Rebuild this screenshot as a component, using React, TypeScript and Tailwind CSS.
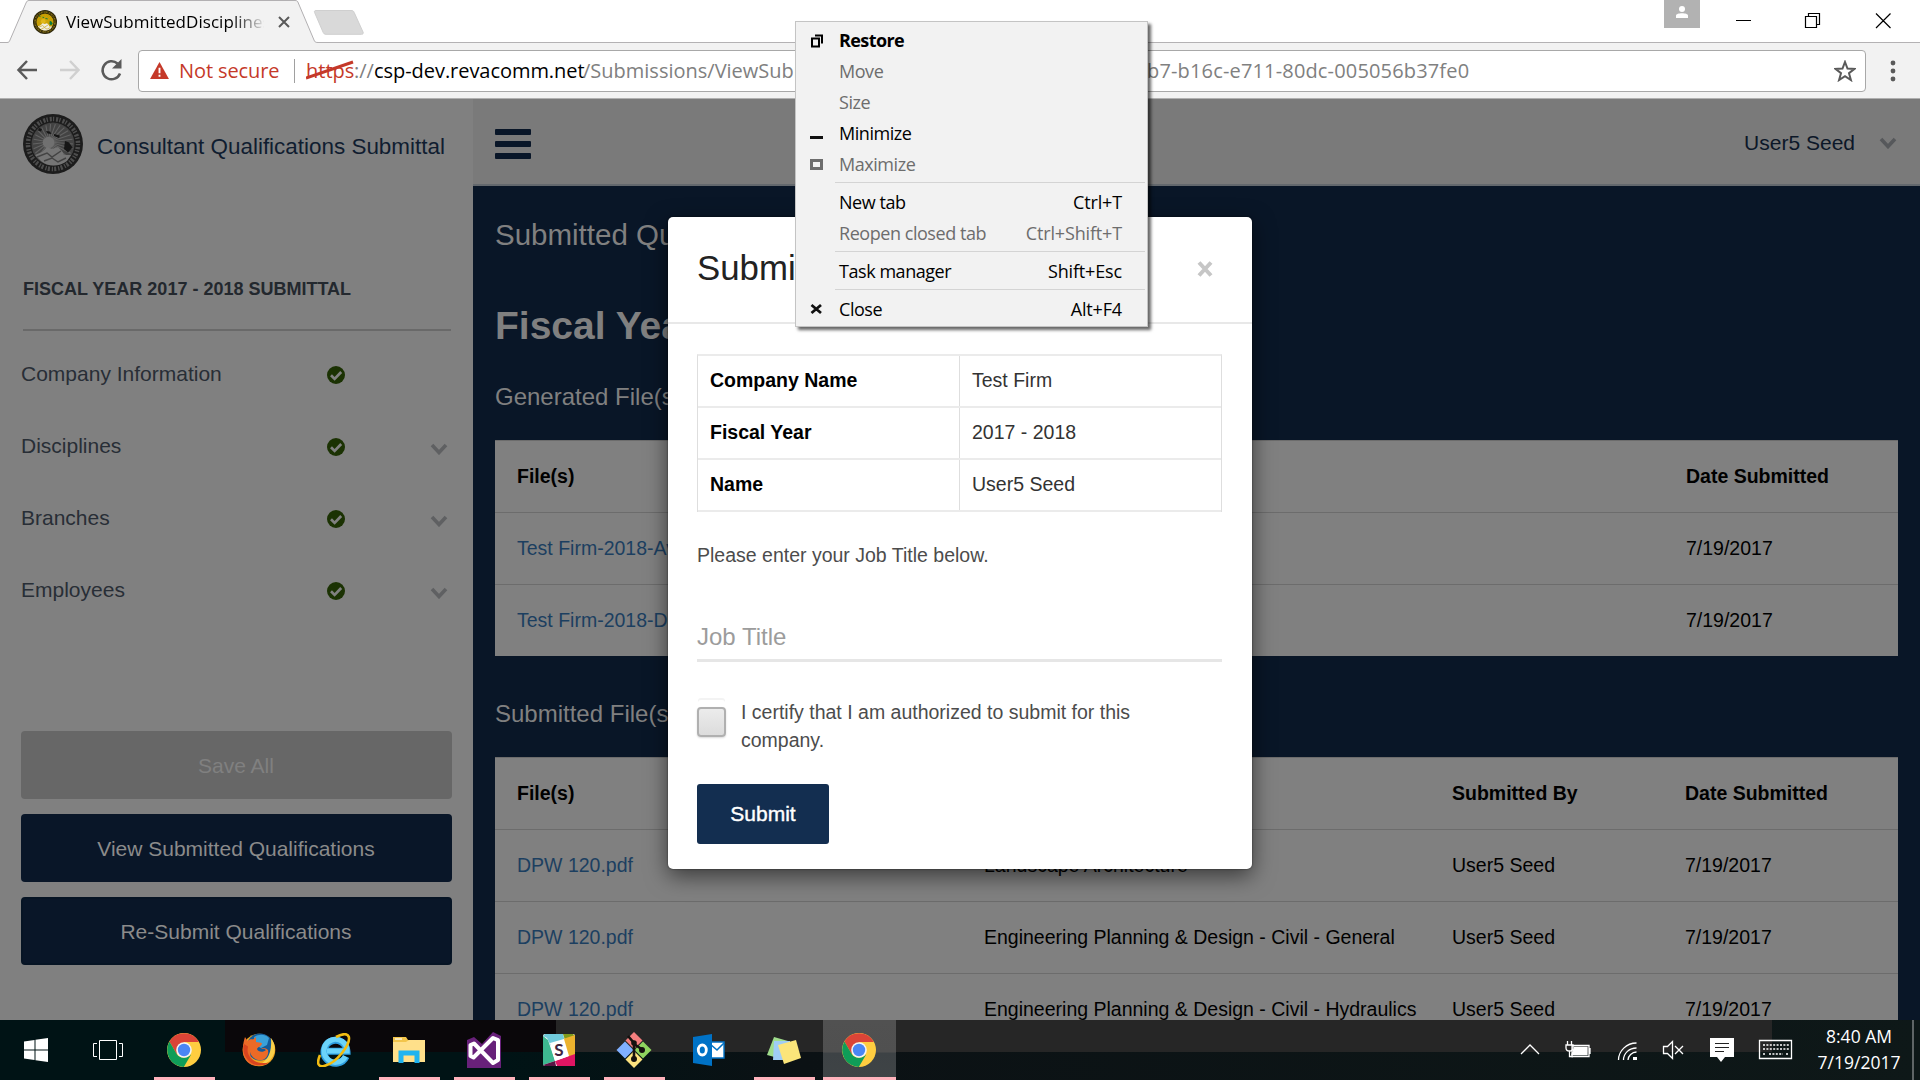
import React from "react";

const seg = "font-['Open_Sans',sans-serif]";

function Seal({ className, color }: { className: string; color?: boolean }) {
  const c = color
    ? { rim: "#2a2408", txt: "#a58a1c", mid: "#c39a00", hill: "#f0eee4", dark: "#0c7b3c", sun: "#e0b81a" }
    : { rim: "#1c1c1c", txt: "#5a5a5a", mid: "#434343", hill: "#757575", dark: "#161616", sun: "#707070" };
  const rays = Array.from({ length: 26 }, (_, i) => (i / 26) * Math.PI * 2);
  return (
    <svg viewBox="0 0 60 60" className={className}>
      <circle cx="30" cy="30" r="30" fill={c.rim} />
      <circle cx="30" cy="30" r="25" fill="none" stroke={c.txt} strokeWidth="4.500" strokeDasharray="1.3 1.9 2.1 1.2" opacity="0.8" />
      <circle cx="30" cy="30" r="21.500" fill={c.mid} />
      {rays.map((a, i) => (
        <line key={i} x1="26" y1="28" x2={30 + Math.cos(a) * 20} y2={30 + Math.sin(a) * 20} stroke={c.sun} strokeWidth="1.100" opacity="0.7" />
      ))}
      <circle cx="25.500" cy="28.500" r="5.800" fill={c.sun} />
      <path d="M16 14l3 1-1 2.500-3-1zM23 17l4 .5 1.500 2.500-4-.5zM31 20l6 1.500-1 2.500-5-2zM42 27l4 1.500 3.500 5-4.500 5-4-3.500z" fill={c.dark} />
      <path d="M12 41l7-3 5-5 5 2 6-2 4 4 2 4 7 0-4 6c-8 6-19 6-26 0z" fill={c.hill} />
      <path d="M14 43l10-4 5 4 9-6M21 47l8-3 6 4 8-4" fill="none" stroke={c.mid} strokeWidth="1.500" />
    </svg>
  );
}

function Chevron({ className }: { className: string }) {
  return (
    <svg viewBox="0 0 18 12" className={className}>
      <path d="M2 2l7 7.5L16 2" fill="none" stroke="currentColor" strokeWidth="3.6" />
    </svg>
  );
}

function CheckCircle() {
  return (
    <svg viewBox="0 0 18 18" className="h-[18px] w-[18px]">
      <circle cx="9" cy="9" r="9" fill="#1b3203" />
      <path d="M4 9.3l3.6 3.6L14.2 6" fill="none" stroke="#808080" strokeWidth="2.7" />
    </svg>
  );
}

function BrowserChrome() {
  return (
    <div className={`h-[99px] shrink-0 bg-white ${seg}`}>
      <div className="relative flex h-[43px] items-start border-b border-[#b4b2b4]">
        <svg viewBox="0 0 380 43" className="absolute left-0 top-0 h-[43px] w-[380px]">
          <path d="M0 42.5H7c2 0 2.500-1 3-2.500L26 3c.8-1.800 1.500-2.500 3-2.500H295c2 0 2.700.7 3.300 2.500L314 40c.6 1.700 1.300 2.500 4 2.500V43H0z" fill="#f2f2f2" />
          <path d="M0 42.500H7c2 0 2.500-1 3-2.500L26 3c.8-1.800 1.500-2.500 3-2.500H295c2 0 2.700.7 3.300 2.500L314 40c.6 1.700 1.300 2.500 4 2.500" fill="none" stroke="#b2b0b2" />
          <path d="M316 10.500H351c2 0 2.600.6 3.200 2L363 32c.6 1.500 0 2.300-1.500 2.300H326c-1.600 0-2.300-.6-2.900-2L314.600 12.500c-.5-1.300-.1-2 1.400-2z" fill="#d9d9d9" stroke="#cfcfcf" />
        </svg>
        <div className="relative flex h-[42px] items-center pl-[33px]">
          <Seal color className="mb-[-1px] h-6 w-6" />
          <div className="ml-[9px] mt-[1px] w-[198px] overflow-hidden whitespace-nowrap text-[17px] tracking-[0.05px] text-black [mask-image:linear-gradient(to_right,#000_165px,transparent_200px)]">ViewSubmittedDisciplines</div>
          <svg viewBox="0 0 12 12" className="ml-[14px] mt-[2px] h-3 w-3">
            <path d="M1 1l10 10M11 1L1 11" stroke="#5a5a5a" strokeWidth="2" />
          </svg>
        </div>
        <div className="relative ml-auto flex">
          <div className="flex h-7 w-9 items-start justify-center bg-[#b2b2b2] pt-[6px]">
            <svg viewBox="0 0 12 12" className="h-3 w-3 fill-white">
              <circle cx="6" cy="3" r="3" />
              <path d="M0 12V9.500C0 8 3 7.200 6 7.200s6 .8 6 2.300V12z" />
            </svg>
          </div>
          <svg viewBox="0 0 220 42" className="h-[42px] w-[220px]" fill="none" stroke="#000" strokeWidth="1.200">
            <path d="M36 20.500h15M105.500 16.500h11v11h-11zM108.500 16.500v-3h11v11h-3M176 13.500l14.500 14.500M190.500 13.500L176 28" />
          </svg>
        </div>
      </div>
      <div className="flex h-14 items-center border-b border-[#b0b0b0] bg-[#f2f2f2] pl-4">
        <svg viewBox="0 0 108 24" className="mb-[1px] h-6 w-[108px]" fill="none" strokeWidth="2.500">
          <path d="M21 12H3M11 3L2.500 12l8.500 9" stroke="#5a5a5a" />
          <path d="M44 12H62M54 3l8.500 9-8.500 9" stroke="#d0d0d0" />
          <path d="M104 15.500A9 9 0 1 1 101.500 5.500" stroke="#5a5a5a" />
          <path d="M105.500 1v9.500H96z" fill="#5a5a5a" />
        </svg>
        <div className="ml-[14px] flex h-[42px] w-[1728px] items-center whitespace-nowrap rounded-[4px] border border-[#a8a8a8] bg-white text-[20px]">
          <svg viewBox="0 0 20 18" className="ml-[11px] h-[17px] w-[19px]">
            <path d="M10 0l10 18H0z" fill="#c53929" />
            <path d="M10 6v6M10 13.500v2.200" stroke="#fff" strokeWidth="2" />
          </svg>
          <span className="ml-[10px] w-[100px] tracking-[-0.1px] text-[#c53929]">Not secure</span>
          <span className="ml-[15px] h-6 w-px bg-[#a0a0a0]" />
          <span className="relative ml-[11px] w-[48px] text-[#c53929]">
            https
            <svg viewBox="0 0 48 20" className="absolute left-0 top-[4px] h-5 w-12">
              <path d="M0 18L47 2" stroke="#c53929" strokeWidth="3" />
            </svg>
          </span>
          <span className="w-[20px] text-[#808080]">://</span>
          <span className="w-[209px] tracking-[-0.05px] text-black">csp-dev.revacomm.net</span>
          <span className="w-[564px] overflow-hidden text-[#808080]">/Submissions/ViewSubm</span>
          <span className="tracking-[0.16px] text-[#808080]">b7-b16c-e711-80dc-005056b37fe0</span>
          <svg viewBox="0 0 22 22" className="ml-auto mr-[9px] h-[22px] w-[22px]">
            <path d="M11 2l2.500 6.600 7 .3-5.500 4.300 1.900 6.800-5.900-3.900-5.900 3.900L7 13.200 1.500 8.900l7-.3z" fill="none" stroke="#5a5a5a" strokeWidth="2" />
          </svg>
        </div>
        <svg viewBox="0 0 6 22" className="ml-[24px] h-[22px] w-[6px] fill-[#5a5a5a]">
          <circle cx="3" cy="3" r="2.400" />
          <circle cx="3" cy="11" r="2.400" />
          <circle cx="3" cy="19" r="2.400" />
        </svg>
      </div>
    </div>
  );
}

function Sidebar() {
  const items = ["Company Information", "Disciplines", "Branches", "Employees"];
  return (
    <aside className="flex w-[473px] shrink-0 flex-col bg-[#808080]">
      <div className="flex h-[94px] items-center pl-[23px]">
        <Seal className="mb-[5px] h-[60px] w-[60px]" />
        <span className="ml-[14px] mt-[2px] whitespace-nowrap text-[22.450px] text-[#101d30]">Consultant Qualifications Submittal</span>
      </div>
      <div className="ml-[23px] mr-[22px] mt-[66px] flex h-[72px] items-start border-b-2 border-[#696969] pt-[20px] text-[18px] font-bold leading-5 text-[#23282e]">FISCAL YEAR 2017 - 2018 SUBMITTAL</div>
      <nav className="mt-[7px] flex flex-col">
        {items.map((it, i) => (
          <div key={it} className="flex h-[72px] items-center pl-[21px] text-[21px] text-[#282e36]">
            <span className="w-[306px] whitespace-nowrap">{it}</span>
            <span className="mt-[2px]"><CheckCircle /></span>
            {i > 0 && <Chevron className="ml-[85px] mt-[5px] h-3 w-[18px] text-[#5f6062]" />}
          </div>
        ))}
      </nav>
      <div className="mt-[105px] flex flex-col gap-[15px] px-[21px] text-[21px] text-[#8b8b8b]">
        <div className="flex h-[68px] items-center justify-center rounded-[4px] bg-[#676767] pr-[1px] pt-[2px] text-[#808080]">Save All</div>
        <div className="flex h-[68px] items-center justify-center rounded-[4px] bg-[#091628] pr-[1px] pt-[2px]">View Submitted Qualifications</div>
        <div className="flex h-[68px] items-center justify-center rounded-[4px] border-2 border-[#061424] bg-[#091628] pr-[1px] pt-[2px]">Re-Submit Qualifications</div>
      </div>
    </aside>
  );
}

const row = "grid h-[72px] shrink-0 items-center border-t border-[#6c6c6c] pl-[22px] whitespace-nowrap";

function Main() {
  const submitted = ["Landscape Architecture", "Engineering Planning & Design - Civil - General", "Engineering Planning & Design - Civil - Hydraulics"];
  return (
    <main className="flex min-w-0 flex-1 flex-col bg-[#091627]">
      <header className="flex h-[87px] shrink-0 items-center border-b-2 border-[#63686d] bg-[#7a7a7a] pl-[22px] pr-[23px]">
        <div className="flex flex-col gap-[6px] pt-[5px]">
          <span className="h-[6px] w-9 rounded-[1px] bg-[#091628]" />
          <span className="h-[6px] w-9 rounded-[1px] bg-[#091628]" />
          <span className="h-[6px] w-9 rounded-[1px] bg-[#091628]" />
        </div>
        <span className="ml-auto mt-[3px] text-[21px] text-[#0c1728]">User5 Seed</span>
        <Chevron className="ml-[24px] mt-[2px] h-3 w-[18px] text-[#56585b]" />
      </header>
      <div className="flex flex-col pl-[22px] pr-[22px]">
        <h1 className="mt-[29px] text-[29.500px] leading-10 text-[#808080]">Submitted Qu</h1>
        <h2 className="mt-[46px] text-[39px] font-bold leading-[50px] text-[#808080]">Fiscal Year</h2>
        <h3 className="mt-[31px] text-[24px] leading-[30px] text-[#808080]">Generated File(s)</h3>
        <div className="mt-[28px] flex flex-col bg-[#808080] text-[19.500px] text-black">
          <div className={`${row} grid-cols-[1169px_1fr] font-bold`}><span>File(s)</span><span>Date Submitted</span></div>
          <div className={`${row} grid-cols-[1169px_1fr]`}><span className="text-[#1c3f60]">Test Firm-2018-Av</span><span>7/19/2017</span></div>
          <div className={`${row} grid-cols-[1169px_1fr]`}><span className="text-[#1c3f60]">Test Firm-2018-D</span><span>7/19/2017</span></div>
        </div>
        <h3 className="mt-[43px] text-[24px] leading-[30px] text-[#808080]">Submitted File(s)</h3>
        <div className="mt-[28px] flex flex-col bg-[#808080] text-[19.500px] text-black">
          <div className={`${row} grid-cols-[935px_233px_1fr] font-bold`}><span>File(s)</span><span>Submitted By</span><span>Date Submitted</span></div>
          {submitted.map((d) => (
            <div key={d} className={`${row} grid-cols-[467px_468px_233px_1fr]`}>
              <span className="text-[#1c3f60]">DPW 120.pdf</span><span>{d}</span><span>User5 Seed</span><span>7/19/2017</span>
            </div>
          ))}
        </div>
      </div>
    </main>
  );
}

function Modal() {
  const rows = [["Company Name", "Test Firm"], ["Fiscal Year", "2017 - 2018"], ["Name", "User5 Seed"]];
  return (
    <div className="absolute left-[668px] top-[217px] flex h-[652px] w-[584px] flex-col rounded-[5px] bg-white text-[19.500px] text-[#4c4c4c] shadow-[0_7px_22px_rgba(0,0,0,0.55),0_0_2px_rgba(0,0,0,0.6)]">
      <div className="flex h-[107px] shrink-0 items-center justify-between border-b-2 border-[#e8e8e8] pb-[3px] pl-[29px] pr-[39px] text-[34.800px] text-[#222]">
        <span>Submi</span>
        <svg viewBox="0 0 16 16" className="mt-[1px] h-4 w-4">
          <path d="M2 1.500l12 13M14 1.500l-12 13" stroke="#c6c6c6" strokeWidth="4" />
        </svg>
      </div>
      <div className="ml-[29px] mr-[30px] mt-[30px] flex flex-col border-x border-t-2 border-x-[#dedede] border-t-[#ebebeb]">
        {rows.map(([k, v]) => (
          <div key={k} className="grid h-[52px] grid-cols-[262px_1fr] border-b-2 border-[#ebebeb]">
            <span className="flex items-center border-r border-[#dedede] pl-[12px] font-bold text-black">{k}</span>
            <span className="flex items-center pl-[12px] text-[#333]">{v}</span>
          </div>
        ))}
      </div>
      <p className="ml-[29px] mt-[29px] leading-7">Please enter your Job Title below.</p>
      <div className="ml-[29px] mr-[30px] mt-[49px] h-[44px] border-b-[3px] border-[#e6e6e6] pt-[3px] text-[24px] leading-8 text-[#9c9c9c]">Job Title</div>
      <div className="mx-[29px] mt-[36px] flex">
        <span className="mt-[9px] h-[30px] w-[29px] shrink-0 rounded-[4px] border-2 border-[#b0b0b0] bg-linear-to-b from-[#ececec] to-[#dcdcdc] shadow-[0_1px_2px_rgba(0,0,0,0.15),0_-8px_0_-1px_#fff,0_-10px_0_-1px_#f3f3f3]" />
        <span className="ml-[15px] w-[420px] leading-7">I certify that I am authorized to submit for this company.</span>
      </div>
      <div className="ml-[29px] mt-[30px] flex h-[60px] w-[132px] items-center justify-center rounded-[3px] bg-[#132e50] text-[21px] text-white [-webkit-text-stroke:0.4px_white]">Submit</div>
    </div>
  );
}

type Item = { t: string; k?: string; off?: boolean; bold?: boolean; icon?: React.ReactNode };

function SystemMenu() {
  const groups: Item[][] = [
    [
      { t: "Restore", bold: true, icon: <path d="M2 5.500h7v8H2zM5 2.500h7v8" fill="none" stroke="#000" strokeWidth="2" /> },
      { t: "Move", off: true },
      { t: "Size", off: true },
      { t: "Minimize", icon: <path d="M0 11.500h13" stroke="#111" strokeWidth="3" /> },
      { t: "Maximize", off: true, icon: <path d="M1.500 3.500h10v8h-10z" fill="none" stroke="#6d6d6d" strokeWidth="3" /> },
    ],
    [{ t: "New tab", k: "Ctrl+T" }, { t: "Reopen closed tab", k: "Ctrl+Shift+T", off: true }],
    [{ t: "Task manager", k: "Shift+Esc" }],
    [{ t: "Close", k: "Alt+F4", icon: <path d="M1.500 3l9.500 8M11 3l-9.500 8" stroke="#111" strokeWidth="2.800" /> }],
  ];
  return (
    <div className={`absolute left-[795px] top-[21px] flex h-[306px] w-[353px] flex-col border border-[#c4c4c4] bg-[#f2f2f2] pt-[3px] text-[18px] text-black shadow-[3px_3px_3px_rgba(0,0,0,0.6)] ${seg}`}>
      {groups.map((g, gi) => (
        <React.Fragment key={gi}>
          {gi > 0 && <div className="ml-[39px] mr-[2px] h-[7px] shrink-0 pt-[2px]"><div className="h-px bg-[#d4d4d4]" /></div>}
          {g.map((it) => (
            <div key={it.t} className={`flex h-[31px] shrink-0 items-center whitespace-nowrap pl-[14px] pr-[25px] ${it.off ? "text-[#6d6d6d]" : ""} ${it.bold ? "font-bold" : ""}`}>
              <svg viewBox="0 0 13 15" className="h-[15px] w-[13px]">{it.icon}</svg>
              <span className={it.bold ? "ml-4 tracking-[-0.6px]" : "ml-4 tracking-[-0.45px]"}>{it.t}</span>
              <span className="ml-auto tracking-[-0.15px]">{it.k}</span>
            </div>
          ))}
        </React.Fragment>
      ))}
    </div>
  );
}

const ChromeIcon = () => (
  <svg viewBox="0 0 34 34" className="h-[34px] w-[34px]">
    <circle cx="17" cy="17" r="17" fill="#ffcd40" />
    <path d="M17 9h14.900a17 17 0 0 0-29.500-.4L9.700 21z" fill="#db4437" />
    <path d="M2.400 8.600A17 17 0 0 0 16.800 34l7.500-12.800C20 26 13 26 9.700 21z" fill="#0f9d58" />
    <circle cx="17" cy="17" r="7.800" fill="#f4f4f4" />
    <circle cx="17" cy="17" r="6.200" fill="#4a86f5" />
  </svg>
);

const FirefoxIcon = () => (
  <svg viewBox="0 0 34 34" className="h-[34px] w-[34px]">
    <circle cx="17" cy="17" r="16.300" fill="#f0a51f" />
    <circle cx="18" cy="14" r="13.500" fill="#145a98" />
    <path d="M12 4c5-3 11-3 15 1l-2 7-6 3-6-3z" fill="#3aa0d8" />
    <path d="M29 5c5 6 5 15 0 21-3 4-8 6-12 6 9-5 13-12 12-27z" fill="#fbd04a" />
    <path d="M3 4l2.500 4C7 6.500 9 6 11 6.500L14 4v5c2 .5 5 0 6 1.500-.5 3-4 3-5 5.500 1 3 6 4 9 1-2-2-4-1-5-1 2-2 5-1 7 1 1 5-2 9-6 10-6 1-11-3-12-8 0 6 4 11 11 12-2 2-6 2-9 1C3 29 .5 22 .8 16 1 11 2 7 3 4z" fill="#ec6a26" />
    <path d="M2 11c-3 9 4 21 16 21.500 4 0 7-1 9-3-9 2-17-1-20-7-2-4-1.500-6-1-9z" fill="#d9441f" />
  </svg>
);

const IEIcon = () => (
  <svg viewBox="0 0 34 34" className="h-[34px] w-[34px]">
    <path d="M29 23.500A11.500 11.500 0 1 1 30 18.300H10" fill="none" stroke="#2f9fe0" strokeWidth="7" />
    <path d="M28.500 23.500A11.500 11.500 0 1 1 30 18H10" fill="none" stroke="#6bd3fa" strokeWidth="5.200" />
    <path d="M3 22C-5 40 14 34 25 20S34-4 19 4" fill="none" stroke="#f2bd12" strokeWidth="2.600" />
  </svg>
);

const FolderIcon = () => (
  <svg viewBox="0 0 34 34" className="h-[34px] w-[34px]">
    <path d="M1 4h13l2 3h17v22H1z" fill="#f3c54b" />
    <path d="M1 9h13l3-2h16v22H1z" fill="#ffe08a" />
    <path d="M3 6h7" stroke="#fff" strokeWidth="1.200" />
    <path d="M6.500 30V17.500h21V30h-5v-7.500h-11V30z" fill="#1fb4f0" />
  </svg>
);

const VSIcon = () => (
  <svg viewBox="0 0 36 36" className="h-9 w-9">
    <path d="M1 8l7-3 8 7L27 0l8 4v32H1z" fill="#68217a" />
    <path d="M4.500 13v11l3 1.500L27 6l5 2.200V28L27 31 8 11.500z" fill="none" stroke="#fff" strokeWidth="4" strokeLinejoin="round" />
  </svg>
);

const SlackIcon = () => (
  <svg viewBox="0 0 32 32" className="h-8 w-8">
    <rect width="32" height="32" rx="2" fill="#fff" />
    <path d="M0 2l2-2h18l2 8-14 4-4-8z" fill="#70cadb" />
    <path d="M0 2l5 4 7 21-12 4z" fill="#3eb991" />
    <path d="M20 0h10l2 2-9 7z" fill="#7f9a1c" />
    <path d="M20 5l12-4v20l-7 2z" fill="#ecb22e" />
    <path d="M12 27l20-7v12H14z" fill="#e01563" />
    <path d="M0 31l12-4 1 5H2z" fill="#5a1444" />
    <path d="M7 9l14-4 5 17-14 5z" fill="#fff" />
    <text x="16" y="22" textAnchor="middle" fontSize="17" fontWeight="700" fill="#3f2440" fontFamily="Lato">S</text>
  </svg>
);

const GitIcon = () => (
  <svg viewBox="0 0 36 36" className="h-9 w-9">
    <path d="M18 0l8.500 8.500-8.500 8.500-8.500-8.500z" fill="#f57f7f" />
    <path d="M9 9.500l8.500 8.500L9 26.500.5 18z" fill="#80b0ff" />
    <path d="M27 9.500l8.500 8.500-8.500 8.500-8.500-8.500z" fill="#8fd45f" />
    <path d="M18 19l8.500 8.500L18 36l-8.500-8.500z" fill="#fde37f" />
    <path d="M12 4l6 7v18M18 12l9 6" stroke="#15110f" strokeWidth="2.600" fill="none" />
    <circle cx="18" cy="11" r="2.800" fill="#15110f" /><circle cx="26" cy="18" r="3" fill="#15110f" /><circle cx="18" cy="27" r="3" fill="#15110f" />
  </svg>
);

const OutlookIcon = () => (
  <svg viewBox="0 0 32 32" className="h-8 w-8">
    <path d="M17 8h14v16H17z" fill="#fff" stroke="#0072c6" strokeWidth="1.400" />
    <path d="M17 10l7 6 7-7" fill="none" stroke="#0072c6" strokeWidth="1.600" />
    <path d="M0 3l19-3v32L0 29z" fill="#0072c6" />
    <ellipse cx="9.300" cy="16" rx="4" ry="5" fill="none" stroke="#fff" strokeWidth="2.800" />
  </svg>
);

const NotesIcon = () => (
  <svg viewBox="0 0 34 28" className="h-7 w-[34px]">
    <path d="M7 1l14 4-6 18-15-4z" fill="#9fdc8c" />
    <path d="M7 5h16v19H6z" fill="#9fcdf5" />
    <path d="M11 9l18-5 5 18-17 6z" fill="#fbe57a" />
  </svg>
);

function Taskbar() {
  const apps: [React.ReactNode, boolean][] = [
    [<ChromeIcon />, true], [<FirefoxIcon />, false], [<IEIcon />, false], [<FolderIcon />, true], [<VSIcon />, true],
    [<SlackIcon />, true], [<GitIcon />, true], [<OutlookIcon />, false], [<NotesIcon />, true],
  ];
  return (
    <div className="flex h-[60px] shrink-0 bg-[linear-gradient(to_right,#001315,#001315_500px,#0b1114_800px,#0e1818)]">
      <div className="flex h-full w-full bg-[linear-gradient(to_right,transparent_225px,#0a070a_225px,#0a070a_556px,#262626_556px,#262626_1772px,transparent_1772px)] bg-[length:100%_32px] bg-no-repeat">
        <div className="flex w-[147px] items-center pl-6">
          <svg viewBox="0 0 24 24" className="h-6 w-6 fill-white"><path d="M0 3.400l10.500-1.500v9.600H0zM11.500 1.700L24 0v11.500H11.500zM0 12.500h10.500v9.600L0 20.600zM11.500 12.500H24V24l-12.500-1.700z" /></svg>
          <svg viewBox="0 0 30 20" className="ml-[45px] h-5 w-[30px]" fill="none" stroke="#fff" strokeWidth="1"><path d="M6.500.5h17v19h-17zM4 3.500H.5v13H4M26 3.500h3.500v13H26" /></svg>
        </div>
        {apps.map(([icon, open], i) => (
          <div key={i} className="flex w-[75px] flex-col items-center">
            <div className="flex h-[57px] items-center pr-[2px] pt-[3px]">{icon}</div>
            {open && <div className="h-[3px] w-[61px] bg-[#ffb3bc]" />}
          </div>
        ))}
        <div className="ml-[1px] flex w-[73px] flex-col items-center bg-[linear-gradient(#515151,#505050_32px,#3d4245_33px,#3f4446)]">
          <div className="flex h-[57px] items-center pr-[2px] pt-[3px]"><ChromeIcon /></div>
          <div className="h-[3px] w-full bg-[#ffb3bc]" />
        </div>
        <svg viewBox="0 0 280 60" className="ml-auto h-[60px] w-[280px]" fill="none" stroke="#fff" strokeWidth="1.300">
          <path d="M1 34l9-9 9 9" />
          <path d="M52 25.500h17v11H52zM70 28v6" />
          <path d="M54.500 27.500h12.500v7H52z" fill="#fff" />
          <path d="M47.500 21v4M51.500 21v4M46 25h7v3c0 2-1 3-3.500 3s-3.500-1-3.500-3zM49.500 31v5.500H53" />
          <path d="M98.500 40c0-9 8-17 18-17M103.500 40c0-7 6-12 13-12M108 40c0-4 4-8 8.500-8" />
          <path d="M113 37h4v3h-4z" fill="#fff" stroke="none" />
          <path d="M143.500 26.500h4l5-5v17l-5-5h-4zM155 26l8 8M163 26l-8 8" />
          <path d="M190 18h24v19h-9l-4 5-4-5h-7z" fill="#fff" stroke="none" />
          <path d="M195 23.500h14M195 27.500h14M195 31.500h9" stroke="#222" strokeWidth="1" />
          <path d="M239.500 20.500h32v18h-32z" />
          <path d="M243 25h26M243 29h26M243 34h3M249 34h14M266 34h3" strokeDasharray="2 1.400" />
        </svg>
        <div className={`ml-[6px] flex w-[106px] flex-col items-center whitespace-nowrap pt-[3px] text-[17.500px] leading-[26px] text-white ${seg}`}>
          <span>8:40 AM</span><span>7/19/2017</span>
        </div>
        <div className="mr-[6px] w-[2px] bg-[#5f6566]" />
      </div>
    </div>
  );
}

export default function App() {
  return (
    <div className="relative flex h-[1080px] w-[1920px] flex-col overflow-hidden font-['Liberation_Sans',Arial,sans-serif] leading-normal">
      <BrowserChrome />
      <div className="flex h-[921px] shrink-0 overflow-hidden">
        <Sidebar />
        <Main />
      </div>
      <Taskbar />
      <Modal />
      <SystemMenu />
    </div>
  );
}
